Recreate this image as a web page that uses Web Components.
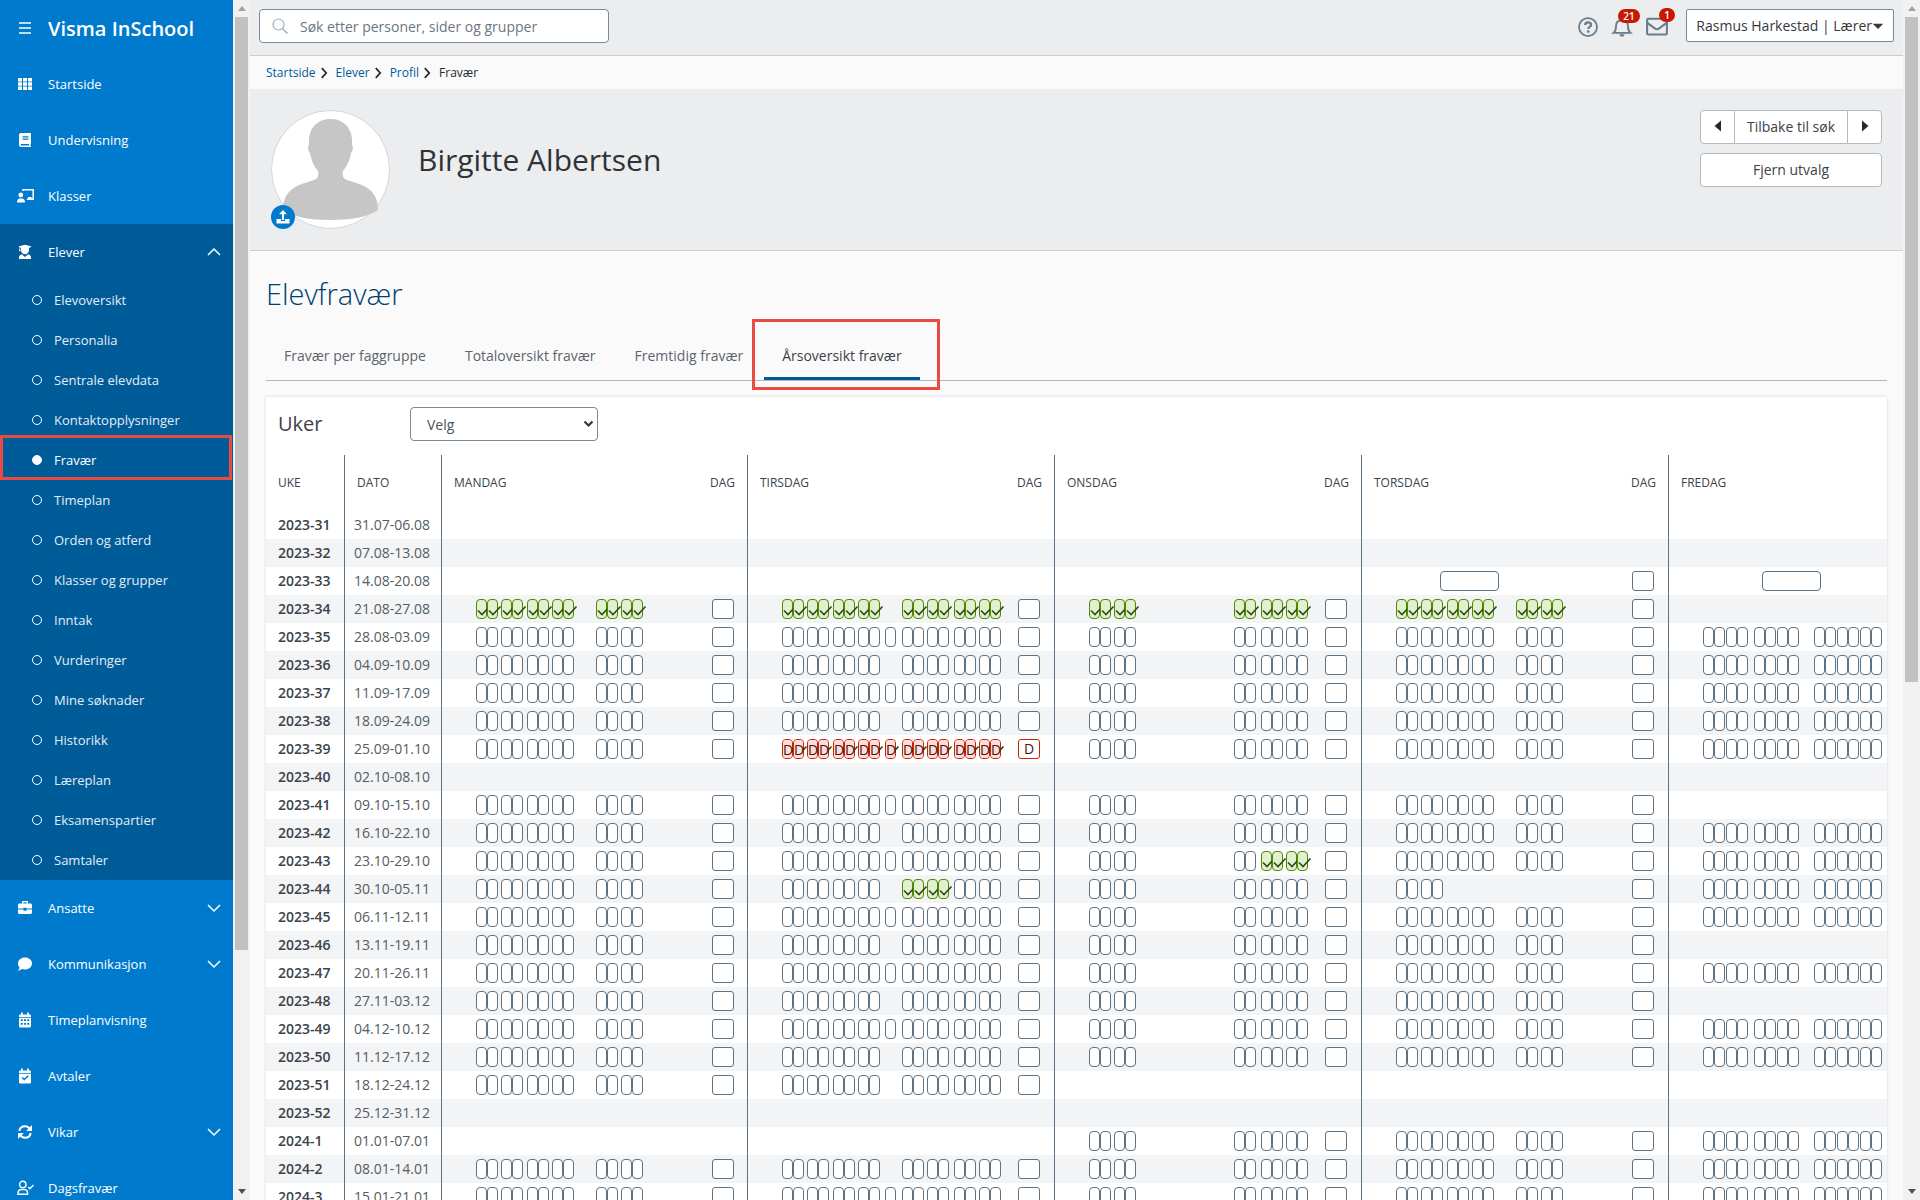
<!DOCTYPE html>
<html lang="no">
<head>
<meta charset="utf-8">
<title>Visma InSchool</title>
<style>
  * { box-sizing: border-box; }
  html, body { height: 100%; }
  body {
    margin: 0;
    display: flex;
    overflow: hidden;
    background: #fafafb;
    color: #3c4248;
    font-family: "Open Sans", "Noto Sans", sans-serif;
    font-size: 14px;
    --blue: #007acc;
    --blue-dark: #005b99;
    --grey: #ecedef;
    --line: #c9ced3;
    --slate: #5d7283;
    --mark: #e94b43;
  }
  main {
    flex: 1;
    min-width: 0;
    height: 100vh;
    overflow: hidden;
  }
  .content { padding: 24px 16px 0; }
  h1 {
    margin: 0 0 2px;
    color: #003e6b;
    font-size: 29px;
    line-height: 38px;
    font-weight: 300;
  }
</style>
</head>
<body>
  <side-menu></side-menu>
  <scroll-rail thumb="80"></scroll-rail>
  <main>
    <top-bar></top-bar>
    <bread-crumb path="Startside,Elever,Profil,Fravær"></bread-crumb>
    <profile-header name="Birgitte Albertsen"></profile-header>
    <div class="content">
      <h1>Elevfravær</h1>
      <tab-list tabs="Fravær per faggruppe,Totaloversikt fravær,Fremtidig fravær,Årsoversikt fravær" active="3"></tab-list>
      <card-panel>
        <week-filter></week-filter>
        <absence-table></absence-table>
      </card-panel>
    </div>
  </main>
  <scroll-rail thumb="57"></scroll-rail>

<script>
const ICONS = {
  menu: `<path d="M2 3h12M2 8h12M2 13h12" stroke="currentColor" stroke-width="1.6"/>`,
  grid: `<path fill="currentColor" d="M1 2h4v3.4H1zM6 2h4v3.4H6zM11 2h4v3.4h-4zM1 6.3h4v3.4H1zM6 6.3h4v3.4H6zM11 6.3h4v3.4h-4zM1 10.6h4V14H1zM6 10.6h4V14H6zM11 10.6h4V14h-4z"/>`,
  book: `<path fill="currentColor" fill-rule="evenodd" d="M4 1h9.2c.5 0 .8.3.8.8v9.4c0 .4-.2.6-.5.8v1.6c.3 0 .5.3.5.6 0 .5-.3.8-.8.8H4c-1.200 0-2-.9-2-2V3c0-1.100.9-2 2-2zM4.500 12c-.7 0-1 .4-1 .8s.3.8 1 .8h7.500V12zM5.500 4.300v1.100h6V4.300zM5.500 6.600v1.100h6V6.600z"/>`,
  board: `<path fill="none" stroke="currentColor" stroke-width="1.500" d="M6 3V1.800h10.200v9.400H9.800"/><path fill="currentColor" d="M11 9h3.600v2H11z"/><circle cx="3.800" cy="7" r="2.400" fill="currentColor"/><path fill="currentColor" d="M0 14.500c0-2.800 1.200-4 3-4h1.800c2 0 3.200 1.200 3.200 4z"/>`,
  student: `<path fill="currentColor" d="M8 .8l6 1.500v.9l-2 .5v2.500c0 2.300-1.700 4-4 4s-4-1.700-4-4V3.700l-.8-.2v1.700l.5 2H2l.4-2V3.200L2 3v-.7zM4.800 10.300L8 13l3.200-2.700c1.800.4 2.800 1.600 2.800 3.300V15H2v-1.400c0-1.700 1-2.900 2.800-3.300z"/>`,
  briefcase: `<path fill="currentColor" fill-rule="evenodd" d="M5 3.500V2c0-.6.4-1 1-1h4c.6 0 1 .4 1 1v1.500h2.500c.8 0 1.500.7 1.500 1.500v3.500H9.500v-.8h-3v.8H1V5c0-.8.7-1.500 1.500-1.500zM6.300 3.500h3.400V2.300H6.300zM1 9.500h5.500v1.300h3V9.500H15v3c0 .8-.7 1.500-1.500 1.500h-11C1.700 14 1 13.300 1 12.500z"/>`,
  comment: `<path fill="currentColor" d="M8 1.500c3.900 0 7 2.600 7 6s-3.100 6-7 6c-1 0-2-.2-2.900-.5C4 13.800 2.600 14.500 1 14.500c.8-.9 1.400-1.900 1.500-3C1.600 10.400 1 9 1 7.500c0-3.400 3.100-6 7-6z"/>`,
  calendar: `<path fill="currentColor" fill-rule="evenodd" d="M4 .5h1.800v2h4.400v-2H12v2h.7c.7 0 1.300.6 1.300 1.200V5H2V3.700c0-.6.6-1.200 1.300-1.200H4zM2 5.800h12v8.400c0 .7-.6 1.300-1.300 1.300H3.300c-.7 0-1.300-.6-1.300-1.300zM3.800 7.300V9h2V7.300zM7 7.300V9h2V7.300zM10.200 7.300V9h2V7.300zM3.800 11v1.800h2V11zM7 11v1.800h2V11zM10.200 11v1.800h2V11z"/>`,
  calcheck: `<path fill="currentColor" fill-rule="evenodd" d="M4 .5h1.800v2h4.400v-2H12v2h.7c.7 0 1.300.6 1.300 1.200V5H2V3.700c0-.6.6-1.200 1.300-1.200H4zM2 5.800h12v8.400c0 .7-.6 1.300-1.300 1.300H3.300c-.7 0-1.300-.6-1.300-1.300zM11.700 8.200l-1-1-3.400 3.400-1.700-1.700-1 1 2.700 2.700z"/>`,
  refresh: `<path fill="none" stroke="currentColor" stroke-width="2" d="M2.300 7C2.800 4.200 5 2.300 8 2.300c2 0 3.700.9 4.800 2.600M13.700 9c-.5 2.800-2.700 4.700-5.700 4.700-2 0-3.700-.9-4.800-2.600"/><path fill="currentColor" d="M15 1v6H9.200zM1 15V9h5.800z"/>`,
  usercheck: `<circle cx="5.800" cy="4.500" r="3.200" fill="none" stroke="currentColor" stroke-width="1.400"/><path fill="none" stroke="currentColor" stroke-width="1.400" d="M1 14.300v-1.500c0-2 1.200-3.200 3-3.200h3.600c1.800 0 3 1.200 3 3.200v1.500zM11.200 7l1.700 1.700 3.600-3.600"/>`,
  up: `<path d="M2 11l6-6 6 6" fill="none" stroke="currentColor" stroke-width="1.500"/>`,
  down: `<path d="M2 5l6 6 6-6" fill="none" stroke="currentColor" stroke-width="1.500"/>`,
  next: `<path d="M5.500 2.500L10.500 8l-5 5.500" fill="none" stroke="currentColor" stroke-width="2"/>`,
  search: `<circle cx="6.500" cy="6.500" r="5.500" fill="none" stroke="currentColor" stroke-width="1.200"/><path d="M10.500 10.500L15.500 15.500" stroke="currentColor" stroke-width="1.500"/>`,
  help: `<circle cx="8" cy="8" r="7.200" fill="none" stroke="currentColor" stroke-width="1.400"/><path d="M5.700 6.400C5.800 5 6.800 4.300 8.100 4.300s2.300.8 2.300 2c0 1.600-2.200 1.500-2.200 3.200" fill="none" stroke="currentColor" stroke-width="1.800"/><circle cx="8.200" cy="11.600" r="1.100" fill="currentColor"/>`,
  bell: `<path d="M1.200 12.700c1.500-1.300 2-2.800 2-5.400C3.200 4.500 5 2.600 8 2.600s4.800 1.900 4.800 4.700c0 2.600.5 4.100 2 5.400z" fill="none" stroke="currentColor" stroke-width="1.500"/><path fill="currentColor" d="M6 13.800h4c0 1.100-.9 2-2 2s-2-.9-2-2zM7.300 1h1.400v2H7.300z"/>`,
  mail: `<rect x=".8" y="2" width="14.400" height="11.500" rx="1" fill="none" stroke="currentColor" stroke-width="1.500"/><path d="M1 5l5.600 4.200c.9.600 1.900.6 2.800 0L15 5" fill="none" stroke="currentColor" stroke-width="1.500"/>`,
  upload: `<path fill="currentColor" d="M8 1l4 4.300H9V11H7V5.300H4z"/><path fill="currentColor" d="M1.500 10H6v2h4v-2h4.500v4.500h-13z"/>`,
  triLeft: `<path fill="#24292e" d="M11 2.500v11L4.500 8z"/>`,
  triRight: `<path fill="#24292e" d="M5 2.500v11L11.500 8z"/>`,
  triDown: `<path fill="currentColor" d="M1 5h14l-7 7z"/>`
};

class UiIcon extends HTMLElement {
  connectedCallback() {
    const size = this.getAttribute("size") || 16;
    const shadow = this.attachShadow({ mode: "open" });
    shadow.innerHTML = `
      <style>
        :host { display: inline-flex; flex: none; }
        svg { display: block; overflow: visible; }
      </style>
      <svg width="${size}" height="${size}" viewBox="0 0 16 16" aria-hidden="true">${ICONS[this.getAttribute("name")]}</svg>
    `;
  }
}
customElements.define("ui-icon", UiIcon);

class ScrollRail extends HTMLElement {
  connectedCallback() {
    const shadow = this.attachShadow({ mode: "open" });
    shadow.innerHTML = `
      <style>
        :host {
          flex: none;
          display: flex;
          flex-direction: column;
          width: 17px;
          height: 100vh;
          background: #f1f1f1;
        }
        .arrow {
          height: 17px;
          display: flex;
          align-items: center;
          justify-content: center;
          color: #505050;
        }
        .arrow::before { content: ""; border: 4px solid transparent; border-top: 5px solid; border-bottom: 0; }
        .arrow.top { color: #a3a3a3; }
        .arrow.top::before { border-top: 0; border-bottom: 5px solid; }
        .track { flex: 1; padding: 0 2px; }
        .thumb { background: #c1c1c1; height: ${this.getAttribute("thumb")}%; }
      </style>
      <div class="arrow top"></div>
      <div class="track"><div class="thumb"></div></div>
      <div class="arrow"></div>
    `;
  }
}
customElements.define("scroll-rail", ScrollRail);

////////////////////////Side menu
const MENU = [
  { icon: "grid", text: "Startside" },
  { icon: "book", text: "Undervisning" },
  { icon: "board", text: "Klasser" },
  { icon: "student", text: "Elever", sub: [
    "Elevoversikt", "Personalia", "Sentrale elevdata", "Kontaktopplysninger", "Fravær",
    "Timeplan", "Orden og atferd", "Klasser og grupper", "Inntak", "Vurderinger",
    "Mine søknader", "Historikk", "Læreplan", "Eksamenspartier", "Samtaler"
  ] },
  { icon: "briefcase", text: "Ansatte", more: true },
  { icon: "comment", text: "Kommunikasjon", more: true },
  { icon: "calendar", text: "Timeplanvisning" },
  { icon: "calcheck", text: "Avtaler" },
  { icon: "refresh", text: "Vikar", more: true },
  { icon: "usercheck", text: "Dagsfravær" }
];

class SideMenu extends HTMLElement {
  connectedCallback() {
    const shadow = this.attachShadow({ mode: "open" });
    const items = MENU.map((item) => {
      const arrow = item.sub ? "up" : item.more ? "down" : "";
      const sub = item.sub
        ? `<ul>${item.sub.map((text) => `
            <li class="sub${text === "Fravær" ? " current" : ""}"><a href="#">${text}</a></li>`).join("")}</ul>`
        : "";
      return `
        <li class="${item.sub ? "open" : ""}">
          <a class="item" href="#">
            <ui-icon name="${item.icon}"></ui-icon>
            <span>${item.text}</span>
            ${arrow ? `<ui-icon name="${arrow}"></ui-icon>` : ""}
          </a>
          ${sub}
        </li>`;
    }).join("");

    shadow.innerHTML = `
      <style>
        :host {
          flex: none;
          display: block;
          width: 233px;
          height: 100vh;
          overflow: hidden;
          background: var(--blue);
          color: #fff;
          font-size: 13px;
          font-weight: 500;
        }
        * { box-sizing: border-box; }
        ul { list-style: none; margin: 0; padding: 0; }
        a { color: inherit; text-decoration: none; }
        .brand, .item {
          display: flex;
          align-items: center;
          gap: 15px;
          height: 56px;
          padding: 0 11px 0 17px;
        }
        .brand { font-size: 20px; font-weight: 600; }
        .brand button {
          display: flex;
          padding: 0;
          border: 0;
          background: none;
          color: inherit;
        }
        .item span { flex: 1; }
        .open { background: var(--blue-dark); }
        .sub { position: relative; }
        .sub a {
          display: flex;
          align-items: center;
          gap: 12px;
          height: 40px;
          padding-left: 32px;
          color: #e3eef7;
        }
        .sub a::before {
          content: "";
          width: 10px;
          height: 10px;
          box-sizing: border-box;
          border: 1px solid #fff;
          border-radius: 50%;
        }
        .current a { color: #fff; }
        .current a::before { background: #fff; }
        .current::after {
          content: "";
          position: absolute;
          inset: -5px 1px 0 0;
          border: 3px solid var(--mark);
        }
      </style>
      <div class="brand"><button aria-label="Meny"><ui-icon name="menu"></ui-icon></button>Visma InSchool</div>
      <nav><ul>${items}</ul></nav>
    `;
  }
}
customElements.define("side-menu", SideMenu);

////////////////////////Top bar
class TopBar extends HTMLElement {
  connectedCallback() {
    const shadow = this.attachShadow({ mode: "open" });
    shadow.innerHTML = `
      <style>
        :host {
          display: flex;
          align-items: flex-start;
          height: 56px;
          padding: 9px;
          box-sizing: border-box;
          background: var(--grey);
          border-bottom: 1px solid var(--line);
        }
        * { box-sizing: border-box; }
        .search {
          display: flex;
          align-items: center;
          gap: 12px;
          width: 350px;
          height: 34px;
          padding: 0 12px;
          margin-right: auto;
          background: #fff;
          border: 1px solid #78899a;
          border-radius: 4px;
          color: #a3adb6;
        }
        input {
          flex: 1;
          min-width: 0;
          padding: 0;
          border: 0;
          outline: 0;
          font: inherit;
        }
        input::placeholder { color: #6b7680; opacity: 1; }
        .tools { display: flex; align-items: center; gap: 14px; height: 34px; padding-top: 2px; margin-right: 18px; }
        .tools button {
          position: relative;
          display: flex;
          padding: 0;
          border: 0;
          background: none;
          color: #687c8c;
        }
        .badge {
          position: absolute;
          left: 6px;
          top: -8px;
          height: 14px;
          padding: 0 5px;
          border-radius: 7px;
          background: #c91800;
          color: #fff;
          font: 600 10px/14px "Open Sans", sans-serif;
        }
        .mail .badge { left: 13px; }
        .user {
          display: flex;
          align-items: center;
          height: 33px;
          padding: 0 9px;
          border: 1px solid #78899a;
          border-radius: 2px;
          background: #fff;
          color: #33393f;
          font: inherit;
          font-weight: 500;
        }
      </style>
      <label class="search">
        <ui-icon name="search"></ui-icon>
        <input type="text" placeholder="Søk etter personer, sider og grupper" aria-label="Søk">
      </label>
      <div class="tools">
        <button aria-label="Hjelp"><ui-icon name="help" size="20"></ui-icon></button>
        <button aria-label="Varsler"><ui-icon name="bell" size="20"></ui-icon><span class="badge">21</span></button>
        <button class="mail" aria-label="Meldinger"><ui-icon name="mail" size="22"></ui-icon><span class="badge">1</span></button>
      </div>
      <button class="user">Rasmus Harkestad | Lærer<ui-icon name="triDown" size="12"></ui-icon></button>
    `;
  }
}
customElements.define("top-bar", TopBar);

class BreadCrumb extends HTMLElement {
  connectedCallback() {
    const shadow = this.attachShadow({ mode: "open" });
    const path = this.getAttribute("path").split(",");
    const last = path.pop();
    shadow.innerHTML = `
      <style>
        :host { display: block; padding: 0 16px; font-size: 12px; line-height: 33px; }
        nav { display: flex; align-items: center; }
        a { color: var(--blue-dark); text-decoration: none; }
        ui-icon { margin: 0 5px 0 1px; color: #24292e; }
        span { color: #24292e; }
      </style>
      <nav>${path.map((text) => `<a href="#">${text}</a><ui-icon name="next" size="14"></ui-icon>`).join("")}<span>${last}</span></nav>
    `;
  }
}
customElements.define("bread-crumb", BreadCrumb);

class ProfileHeader extends HTMLElement {
  connectedCallback() {
    const shadow = this.attachShadow({ mode: "open" });
    shadow.innerHTML = `
      <style>
        :host {
          display: flex;
          align-items: flex-start;
          gap: 28px;
          height: 162px;
          padding: 21px 21px 0;
          box-sizing: border-box;
          background: var(--grey);
          border-bottom: 1px solid var(--line);
        }
        * { box-sizing: border-box; }
        .avatar { position: relative; width: 119px; height: 119px; }
        .avatar svg { display: block; }
        .upload {
          position: absolute;
          left: 0;
          bottom: 0;
          display: flex;
          align-items: center;
          justify-content: center;
          width: 24px;
          height: 24px;
          padding: 0;
          border: 0;
          border-radius: 50%;
          background: var(--blue);
          color: #fff;
        }
        h2 {
          flex: 1;
          margin: 28px 0 0;
          color: #2f3336;
          font-size: 30px;
          line-height: 44px;
          font-weight: 400;
        }
        .actions { display: grid; gap: 9px; width: 182px; }
        .group { display: flex; }
        .actions button {
          height: 34px;
          padding: 0 0 2px;
          border: 1px solid #b3bac1;
          border-radius: 4px;
          background: #fff;
          color: #3a4147;
          font: inherit;
        }
        .group button { width: 35px; display: flex; align-items: center; justify-content: center; }
        .group button:first-child { border-radius: 4px 0 0 4px; }
        .group button:nth-child(2) { flex: 1; border-width: 1px 0; border-radius: 0; }
        .group button:last-child { border-radius: 0 4px 4px 0; }
      </style>
      <div class="avatar">
        <svg width="119" height="119" viewBox="0 0 119 119" aria-hidden="true">
          <circle cx="59.500" cy="59.500" r="59" fill="#fff" stroke="#d3d6d9"/>
          <path fill="#c6c6c6" d="M59.500 9C71 9 80 16 81 29v6c1.500 1 1 6-1 8-1.500 8-4 13-8 18-1 4 0 8 4 9 8 3 17 4 24 11 5 5 7 11 7 19-10 7-27 10-47.500 10S22 107 12 100c0-8 2-14 7-19 7-7 16-8 24-11 4-1 5-5 4-9-4-5-6.500-10-8-18-2-2-2.500-7-1-8v-6C39 16 48 9 59.500 9z"/>
        </svg>
        <button class="upload" aria-label="Last opp bilde"><ui-icon name="upload"></ui-icon></button>
      </div>
      <h2>${this.getAttribute("name")}</h2>
      <div class="actions">
        <div class="group">
          <button aria-label="Forrige"><ui-icon name="triLeft"></ui-icon></button>
          <button>Tilbake til søk</button>
          <button aria-label="Neste"><ui-icon name="triRight"></ui-icon></button>
        </div>
        <button>Fjern utvalg</button>
      </div>
    `;
  }
}
customElements.define("profile-header", ProfileHeader);

class TabList extends HTMLElement {
  connectedCallback() {
    const shadow = this.attachShadow({ mode: "open" });
    const active = Number(this.getAttribute("active"));
    const tabs = this.getAttribute("tabs").split(",");
    shadow.innerHTML = `
      <style>
        :host {
          display: flex;
          gap: 3px;
          height: 66px;
          margin-bottom: 16px;
          padding-top: 15px;
          box-sizing: border-box;
          border-bottom: 1px solid #adb7bf;
        }
        button {
          position: relative;
          padding: 4px 18px 0;
          border: 0;
          border-bottom: 3px solid transparent;
          background: none;
          color: #5c656d;
          font: inherit;
        }
        .active { border-color: var(--blue-dark); color: #3c4248; }
        .active::after {
          content: "";
          position: absolute;
          inset: -11px -20px -13px -12px;
          border: 3px solid var(--mark);
        }
      </style>
      ${tabs.map((text, i) => `<button role="tab" class="${i === active ? "active" : ""}">${text}</button>`).join("")}
    `;
  }
}
customElements.define("tab-list", TabList);

class CardPanel extends HTMLElement {
  connectedCallback() {
    const shadow = this.attachShadow({ mode: "open" });
    shadow.innerHTML = `
      <style>
        :host {
          display: block;
          overflow: hidden;
          padding-top: 10px;
          background: #fff;
          box-shadow: 0 0 3px rgba(0, 0, 0, 0.15);
        }
      </style>
      <slot></slot>
    `;
  }
}
customElements.define("card-panel", CardPanel);

class WeekFilter extends HTMLElement {
  connectedCallback() {
    const shadow = this.attachShadow({ mode: "open" });
    shadow.innerHTML = `
      <style>
        :host { display: flex; align-items: center; margin-bottom: 14px; padding-left: 12px; }
        label { width: 132px; font-size: 20px; line-height: 34px; }
        .box { display: grid; align-items: center; width: 188px; height: 34px; }
        .box > * { grid-area: 1 / 1; }
        svg { justify-self: end; margin-right: 4px; pointer-events: none; }
        select {
          appearance: none;
          height: 34px;
          padding: 0 16px;
          border: 1px solid #78899a;
          border-radius: 4px;
          background: #fff;
          color: #4a5259;
          font: inherit;
        }
      </style>
      <label for="weeks">Uker</label>
      <div class="box">
        <select id="weeks"><option>Velg</option></select>
        <svg width="11" height="8" viewBox="0 0 11 8"><path d="M1.500 1.500l4 4 4-4" fill="none" stroke="#2f3840" stroke-width="2.200"/></svg>
      </div>
    `;
  }
}
customElements.define("week-filter", WeekFilter);

////////////////////////Absence table
// A day is five time slots; the number is how many lessons are in the slot,
// "v" marks them as present, "D" as documented absence, "_" leaves a free lesson.
const MON = "4|4||4|";
const TUE = "4|4||4|4";
const TUE1 = "4|4|1|4|4";
const WED = "4|||_2|4";
const THU = "4|4||4|";
const FRI = "friday";

const WEEKS = [
  ["2023-31", "31.07-06.08"],
  ["2023-32", "07.08-13.08"],
  ["2023-33", "14.08-20.08", "", "", "", "wide", "wide"],
  ["2023-34", "21.08-27.08", "v4|v4||v4|", "v4|v4||v4|v4", "v4|||v_2|v4", "v4|v4||v4|"],
  ["2023-35", "28.08-03.09", MON, TUE1, WED, THU, FRI],
  ["2023-36", "04.09-10.09", MON, TUE, WED, THU, FRI],
  ["2023-37", "11.09-17.09", MON, TUE1, WED, THU, FRI],
  ["2023-38", "18.09-24.09", MON, TUE, WED, THU, FRI],
  ["2023-39", "25.09-01.10", MON, "D4|D4|D1|D4|D4", WED, THU, FRI],
  ["2023-40", "02.10-08.10"],
  ["2023-41", "09.10-15.10", MON, TUE1, WED, THU],
  ["2023-42", "16.10-22.10", MON, TUE, WED, THU, FRI],
  ["2023-43", "23.10-29.10", MON, TUE1, "4|||_2|v4", THU, FRI],
  ["2023-44", "30.10-05.11", MON, "4|4||v4|4", WED, "4||||", FRI],
  ["2023-45", "06.11-12.11", MON, TUE1, WED, THU, FRI],
  ["2023-46", "13.11-19.11", MON, TUE, WED, THU],
  ["2023-47", "20.11-26.11", MON, TUE1, WED, THU, FRI],
  ["2023-48", "27.11-03.12", MON, TUE, WED, THU],
  ["2023-49", "04.12-10.12", MON, TUE1, WED, THU, FRI],
  ["2023-50", "11.12-17.12", MON, TUE, WED, THU, FRI],
  ["2023-51", "18.12-24.12", MON, TUE],
  ["2023-52", "25.12-31.12"],
  ["2024-1", "01.01-07.01", "", "", WED, THU, FRI],
  ["2024-2", "08.01-14.01", MON, TUE, WED, THU, FRI],
  ["2024-3", "15.01-21.01", MON, TUE1, WED, THU, FRI]
];

const DAYS = ["Mandag", "Tirsdag", "Onsdag", "Torsdag", "Fredag"];
const LAST_DAY = DAYS.length - 1;

class DaySlots extends HTMLElement {
  connectedCallback() {
    const shadow = this.attachShadow({ mode: "open" });
    const plan = this.getAttribute("plan");
    const isLast = Number(this.getAttribute("day")) === LAST_DAY;
    const tick = `<svg width="14" height="12" viewBox="0 0 14 12"><path d="M1 5.500l4 4L12.500 1.500" fill="none" stroke="#2c4a16" stroke-width="1.600"/></svg>`;

    const slot = function (code) {
      const count = Number(code.replace(/\D/g, ""));
      const state = code.startsWith("v") ? "present" : code.startsWith("D") ? "absent" : "";
      const inner = state === "present" ? tick : state === "absent" ? `${tick}<b>D</b>` : "";
      const lesson = `<i class="lesson ${state}">${inner}</i>`;
      let html = code.includes("_") ? `<span class="pair"></span>` : "";
      for (let left = count; left > 0; left -= 2) {
        html += `<span class="pair">${lesson.repeat(Math.min(left, 2))}</span>`;
      }
      return `<div class="slot">${html}</div>`;
    };

    let slots = "";
    if (plan === "wide") {
      slots = `<i></i><i class="box"></i><i></i>`;
    } else if (plan === "friday") {
      slots = ["4", "4", "6"].map(slot).join("");
    } else {
      slots = plan.split("|").map(slot).join("");
    }
    const absent = plan.startsWith("D");

    shadow.innerHTML = `
      <style>
        :host {
          display: grid;
          grid-template-columns: 51px 52px 17px 52px 64px 22px;
          padding: 4px 0 4px 34px;
        }
        :host([plan="friday"]) { grid-template-columns: 51px 60px 68px; }
        :host([plan="wide"]) { grid-template-columns: 44px 59px 133px 22px; }
        :host([plan="wide"][day="4"]) { grid-template-columns: 59px 59px; }
        * { box-sizing: border-box; }
        .slot { display: flex; gap: 3px; }
        :host([plan="friday"]) .slot { gap: 1px; }
        .pair { display: flex; min-width: 22px; }
        .lesson, .box {
          height: 20px;
          border: 1px solid var(--slate);
          border-radius: 4px;
          background: #fff;
          font-style: normal;
        }
        .lesson { position: relative; width: 11px; flex: none; }
        .present { background: #e3f0d0; border-color: #4d8a00; }
        .absent { background: #fbdedb; border-color: #cc2200; }
        /* the tick is wider than a lesson and runs out over the right edge */
        .lesson svg { position: absolute; left: 0; top: 5px; }
        b {
          position: absolute;
          inset: 0;
          border-radius: 3px;
          background: #fbdedb;
          color: #4a1512;
          font-size: 14px;
          line-height: 20px;
          font-weight: 500;
          text-align: center;
        }
        .day { border-radius: 3px; text-align: center; line-height: 18px; }
        .day.out { border-color: #cc2200; color: #4a1512; font-weight: 500; }
      </style>
      ${slots}
      ${isLast ? "" : `<i class="box day ${absent ? "out" : ""}">${absent ? "D" : ""}</i>`}
    `;
  }
}
customElements.define("day-slots", DaySlots);

class AbsenceTable extends HTMLElement {
  connectedCallback() {
    const shadow = this.attachShadow({ mode: "open" });
    const head = DAYS.map((day, i) => `
      <th scope="col"><div><span>${day}</span>${i < LAST_DAY ? "<span>Dag</span>" : ""}</div></th>`).join("");
    const rows = WEEKS.map(([week, dates, ...plans]) => `
      <tr>
        <th scope="row">${week}</th>
        <td class="date">${dates}</td>
        ${DAYS.map((day, i) => `<td>${plans[i] ? `<day-slots plan="${plans[i]}" day="${i}"></day-slots>` : ""}</td>`).join("")}
      </tr>`).join("");

    shadow.innerHTML = `
      <style>
        :host { display: block; }
        table {
          width: 100%;
          table-layout: fixed;
          border-collapse: separate;
          border-spacing: 0;
        }
        .week { width: 79px; }
        .dates { width: 97px; }
        .first { width: 306px; }
        .days { width: 307px; }
        th, td {
          box-sizing: border-box;
          height: 28px;
          padding: 0;
          border-right: 1px solid var(--slate);
          text-align: left;
          white-space: nowrap;
        }
        th:last-child, td:last-child { border-right: 0; }
        thead th {
          height: 56px;
          padding: 0 12px 2px;
          font-size: 12px;
          font-weight: 500;
          text-transform: uppercase;
        }
        thead div { display: flex; justify-content: space-between; }
        tbody th { padding: 0 0 2px 12px; font-weight: 600; }
        .date { padding: 0 0 2px 9px; color: #545c64; }
        tbody tr:nth-child(even) { background: #f3f4f6; }
      </style>
      <table>
        <colgroup><col class="week"><col class="dates"><col class="first"><col class="days" span="3"><col></colgroup>
        <thead><tr><th scope="col">Uke</th><th scope="col">Dato</th>${head}</tr></thead>
        <tbody>${rows}</tbody>
      </table>
    `;
  }
}
customElements.define("absence-table", AbsenceTable);
</script>
</body>
</html>
